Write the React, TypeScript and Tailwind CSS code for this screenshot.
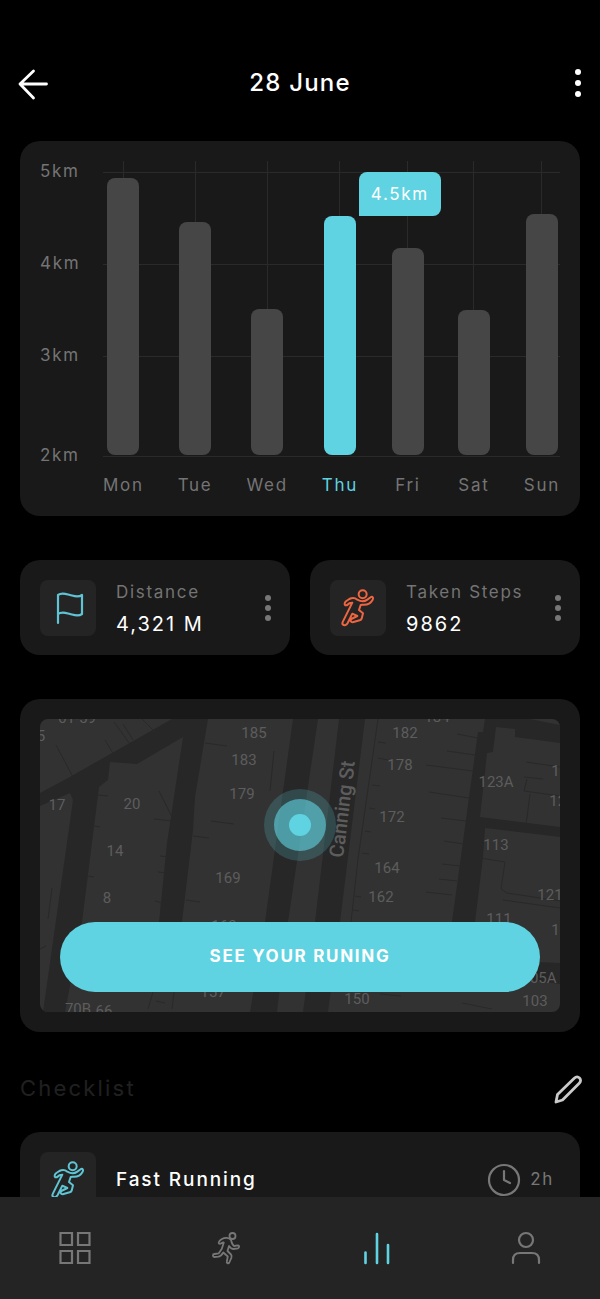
import React from "react";

const days = [
    { name: "Mon", height: 277 },
    { name: "Tue", height: 233 },
    { name: "Wed", height: 146 },
    { name: "Thu", height: 239, value: "4.5km" },
    { name: "Fri", height: 207 },
    { name: "Sat", height: 145 },
    { name: "Sun", height: 241 },
];

const houses = [
    { x: 37, y: 4, n: "61-59" },
    { x: 1, y: 22, n: "5" },
    { x: 17, y: 91, n: "17" },
    { x: 92, y: 90, n: "20" },
    { x: 75, y: 137, n: "14" },
    { x: 67, y: 184, n: "8" },
    { x: 214, y: 19, n: "185" },
    { x: 204, y: 46, n: "183" },
    { x: 202, y: 80, n: "179" },
    { x: 188, y: 164, n: "169" },
    { x: 184, y: 212, n: "163" },
    { x: 173, y: 278, n: "157" },
    { x: 38, y: 295, n: "70B" },
    { x: 64, y: 297, n: "66" },
    { x: 397, y: 3, n: "184" },
    { x: 365, y: 19, n: "182" },
    { x: 360, y: 51, n: "178" },
    { x: 352, y: 103, n: "172" },
    { x: 347, y: 154, n: "164" },
    { x: 341, y: 183, n: "162" },
    { x: 317, y: 285, n: "150" },
    { x: 456, y: 68, n: "123A" },
    { x: 456, y: 131, n: "113" },
    { x: 459, y: 205, n: "111" },
    { x: 510, y: 181, n: "121" },
    { x: 524, y: 57, n: "127" },
    { x: 522, y: 87, n: "125" },
    { x: 524, y: 216, n: "119" },
    { x: 499, y: 264, n: "105A" },
    { x: 495, y: 287, n: "103" },
];

const Sprinter = () => (
    <svg viewBox="120 112 108 120" className="h-10 w-9" fill="none" stroke="currentColor" strokeWidth="6" strokeLinejoin="round" strokeLinecap="round" aria-hidden="true">
        <circle cx="188" cy="131" r="12" />
        <path d="M136 164C132 161 134 155 139 151L148 145C156 141 166 142 172 147 182 153 194 153 202 147L213 139C218 137 221 142 218 147 212 158 200 163 188 162L182 163 177 178 189 188 185 204C184 207 182 208 179 209L158 215C152 215 150 209 154 205L172 196 157 189 143 217C139 224 133 225 129 222 126 220 127 216 129 212L157 156 148 158 140 164Z" />
    </svg>
);

const Dots = ({ label }: { label: string }) => (
    <button type="button" aria-label={label} className="flex w-6 flex-col items-center gap-1 text-[#777777]">
        <span className="size-1.5 rounded-full bg-current" />
        <span className="size-1.5 rounded-full bg-current" />
        <span className="size-1.5 rounded-full bg-current" />
    </button>
);

const IconBox = ({ children }: { children: React.ReactNode }) => (
    <div className="flex size-14 shrink-0 items-center justify-center rounded-lg bg-[#242424]">{children}</div>
);

const Stat = ({ label, value, children }: { label: string; value: string; children: React.ReactNode }) => (
    <div className="flex h-[95px] items-center rounded-[20px] bg-[#191919] pl-5 pr-2.5">
        <IconBox>{children}</IconBox>
        <div className="ml-5 flex-1 whitespace-nowrap">
            <div className="text-[17px] leading-8 tracking-widest text-[#747474]">{label}</div>
            <div className="text-xl leading-8 tracking-widest text-white">{value}</div>
        </div>
        <Dots label={`${label} options`} />
    </div>
);

const WeekChart = () => (
    <section className="mx-5 grid rounded-[20px] bg-[#191919] px-5 pb-[19px] pt-5 text-[17px] tracking-widest text-[#747474]">
        <div className="col-start-1 row-start-1 grid grid-rows-[92px_92px_100px_22px]">
            {["5km", "4km", "3km", "2km"].map((km) => (
                <div key={km} className="flex h-[22px] items-center">
                    <span className="w-[63px]">{km}</span>
                    <span className="h-px flex-1 bg-[#2a2a2a]" />
                </div>
            ))}
        </div>
        <div className="col-start-1 row-start-1 ml-[63px] flex justify-between">
            {days.map((day) => (
                <div key={day.name} className="flex flex-col items-center">
                    <div className="flex h-[294px] flex-col items-center">
                        <span className="w-px flex-1 bg-[#2a2a2a]" />
                        <div
                            className={`relative w-8 rounded-lg ${day.value ? "bg-[#5fd3e1]" : "bg-[#464646]"}`}
                            style={{ height: day.height }}
                        >
                            {day.value && (
                                <span className="absolute bottom-full left-full z-10 ml-[3px] rounded-lg rounded-bl-none bg-[#5fd3e1] px-3 py-2.5 leading-6 text-white">
                                    {day.value}
                                </span>
                            )}
                        </div>
                    </div>
                    <span className={`mt-[18px] leading-6 ${day.value ? "text-[#5fd3e1]" : ""}`}>{day.name}</span>
                </div>
            ))}
        </div>
    </section>
);

const StreetMap = () => (
    <svg viewBox="0 0 520 293" preserveAspectRatio="xMidYMid slice" className="h-[293px] w-full rounded-lg bg-[#323232]" role="img" aria-label="Street map">
        <g fill="#272727">
            <path d="M0 74 28 59 132 0H168L155 78 153 111 142 203 138 235H116L119 203 127 124 143 18 97 45 70 43 68 61 59 68 42 203 25 293H3L33 81 30 74 0 87Z" />
            <path d="M253 0H278L248 203 237 293H210L225 203Z" />
            <path d="M299 0H325L300 203 288 293H263L275 203Z" />
            <path d="M445 0H490L520 6V24L475 18V10L456 8 453 33 447 34 440 98 520 108V118L445 109 443 138 435 203 430 240 520 244V265L405 250 412 203 438 13H443Z" />
        </g>
        <g fill="none" stroke="#292929">
            <path d="M16 26 33 58M65 21 74 36M74 3 90 25M83 5 93 21M102 0 115 13M119 72 132 98M114 100 132 102M165 24 187 27M234 32 230 72M171 102 194 105M153 117 169 119M146 181 160 183M120 137 130 138M118 153 128 154M115 182 123 184M58 76 68 77M54 107 60 108M48 157 54 158M12 169 8 200M0 230 6 227M113 273 108 290M134 273 132 290M116 282 125 284" />
            <path d="M338 0 318 140 311 203M338 23 346 24M338 39 348 41M332 66 340 67M329 89 335 90M325 112 331 113M322 134 329 135M315 177 321 178M313 191 319 192M417 15 438 19M407 32 435 36M386 46 433 52M389 73 429 79M401 99 426 102M404 122 424 125M402 145 420 147M399 160 417 162M386 173 412 176M486 43 520 48M484 58 503 60M487 60 484 72 520 77M490 75 486 106M440 139 465 143M465 143 461 170 467 174 520 182M463 181 520 189M340 275 361 277M422 284 452 290" />
        </g>
        <g fill="#5d5d5d" fontFamily="Roboto, sans-serif" fontSize="15" textAnchor="middle">
            {houses.map((h) => (
                <text key={h.n} x={h.x} y={h.y}>{h.n}</text>
            ))}
            <text transform="translate(309 91) rotate(-83)" fontSize="20" fontWeight="500">Canning St</text>
        </g>
        <g fill="#5fd3e1">
            <circle cx="260" cy="106" r="36" opacity=".2" />
            <circle cx="260" cy="106" r="26" opacity=".6" />
            <circle cx="260" cy="106" r="11" />
        </g>
    </svg>
);

const NavButton = ({ label, active, children }: { label: string; active?: boolean; children: React.ReactNode }) => (
    <button
        type="button"
        aria-label={label}
        aria-current={active ? "page" : undefined}
        className={`flex flex-1 items-center justify-center ${active ? "text-[#5fd3e1]" : "text-[#777777]"}`}
    >
        <svg viewBox="0 0 36 36" className="size-9" fill="none" stroke="currentColor" strokeWidth="2.2" strokeLinecap="round" aria-hidden="true">
            {children}
        </svg>
    </button>
);

const App = () => {
    return (
        <div className="min-h-screen bg-black pb-[72px] font-['Inter','Liberation_Sans',sans-serif]">
            <header className="flex items-center justify-between px-4 pb-[38px] pt-[63px]">
                <button type="button" aria-label="Back" className="text-white">
                    <svg viewBox="0 0 36 36" className="size-9" fill="none" stroke="currentColor" strokeWidth="2.8" strokeLinecap="round" strokeLinejoin="round">
                        <path d="M30.500 19H4M17.500 6 4 19 17.500 33" />
                    </svg>
                </button>
                <h1 className="text-2xl font-medium leading-10 tracking-wider text-white">28 June</h1>
                <button type="button" aria-label="More" className="flex w-9 flex-col items-end gap-[5px] pr-[3px] text-white">
                    <span className="size-1.5 rounded-full bg-current" />
                    <span className="size-1.5 rounded-full bg-current" />
                    <span className="size-1.5 rounded-full bg-current" />
                </button>
            </header>

            <WeekChart />

            <section className="mx-5 mt-11 grid grid-cols-2 gap-5">
                <Stat label="Distance" value="4,321 M">
                    <svg viewBox="0 0 36 36" className="size-9 text-[#5fc4d3]" fill="none" stroke="currentColor" strokeWidth="2.2" strokeLinecap="round" strokeLinejoin="round">
                        <path d="M8 33V5c4-3 8-1 12 0s8 3 12 0v19c-4 3-8 1-12 0s-8-3-12 0" />
                    </svg>
                </Stat>
                <Stat label="Taken Steps" value="9862">
                    <span className="text-[#ee6541]"><Sprinter /></span>
                </Stat>
            </section>

            <section className="relative mx-5 mt-11 rounded-[20px] bg-[#191919] p-5">
                <StreetMap />
                <button type="button" className="absolute inset-x-10 bottom-10 h-[70px] rounded-full bg-[#5fd3e1] text-[17px] font-bold tracking-widest text-white">
                    SEE YOUR RUNING
                </button>
            </section>

            <div className="mx-5 mt-9 flex items-center justify-between">
                <h2 className="text-[22px] leading-10 tracking-widest text-[#202020]">Checklist</h2>
                <button type="button" aria-label="Edit checklist" className="-mr-1 text-[#cacaca]">
                    <svg viewBox="0 0 32 32" className="size-8" fill="none" stroke="currentColor" strokeWidth="2.8" strokeLinejoin="round">
                        <path d="M4 30l1.500-7.500L22 6.500c2-2 4-2 5.500-.500s1.500 3.500-.500 5.500L10.500 28z" />
                    </svg>
                </button>
            </div>

            <section className="mx-5 mt-6 flex h-24 items-center rounded-[20px] bg-[#191919] px-5">
                <IconBox>
                    <span className="text-[#5fc4d3]"><Sprinter /></span>
                </IconBox>
                <span className="ml-5 flex-1 text-[19px] font-medium tracking-widest text-white">Fast Running</span>
                <div className="flex items-center gap-2 pr-1.5 text-[17px] tracking-widest text-[#777777]">
                    <svg viewBox="0 0 36 36" className="size-9" fill="none" stroke="currentColor" strokeWidth="2.2" strokeLinecap="round" strokeLinejoin="round" aria-hidden="true">
                        <circle cx="18" cy="18" r="15" />
                        <path d="M18 9v9l6 3" />
                    </svg>
                    2h
                </div>
            </section>

            <nav className="fixed inset-x-0 bottom-0 z-20 flex h-[102px] bg-[#242424]">
                <NavButton label="Dashboard">
                    <path strokeLinecap="butt" d="M3.500 3h11.500v12H3.500zM21 3h11.500v12H21zM3.500 21h11.500v12H3.500zM21 21h11.500v12H21z" />
                </NavButton>
                <NavButton label="Activities">
                    <g strokeWidth="1.800" strokeLinejoin="round">
                        <circle cx="25.500" cy="6" r="3" />
                        <path d="M12 13.500c-1-1 .5-3 3-4.500 3-1.700 7-1.500 9 1 .7 3 1.500 5 3 6l4-.700c1.500 0 1.500 2.500 0 3l-4.500.700c-2 0-3.500-1.500-4.500-3l-1.500 5 3.500 3.500c1 1 .6 2.200.3 3.500l-2 4.500c-1 1.500-3 .5-2.500-1l1-5-4.500-4c-1.500 2.500-3 4-5 4.200l-4 .300c-1.800 0-1.800-3 0-3l4.500-.700 3-4.500 2-6.300c-2.500-.2-3 2.300-4.800 1z" />
                    </g>
                </NavButton>
                <NavButton label="Statistics" active>
                    <path strokeWidth="2.600" d="M8.500 22.500v10.500M20 4v29M31 15v18" />
                </NavButton>
                <NavButton label="Profile">
                    <circle cx="19" cy="10" r="7" />
                    <path d="M6 33v-3c0-5 3-7 7-7h12c4 0 7 2 7 7v3" />
                </NavButton>
            </nav>
        </div>
    );
};

export default App;
